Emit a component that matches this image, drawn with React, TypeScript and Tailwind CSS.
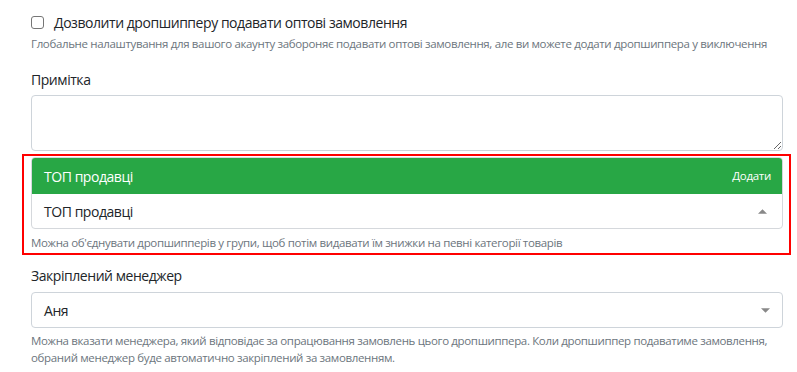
import React from "react";

const font = "font-['Segoe_UI','Open_Sans','Noto_Sans',sans-serif]";

const Caret = ({ up }: { up?: boolean }) => (
  <svg width="9" height="5" viewBox="0 0 10 5" className="text-[#888]">
    {up ? <path d="M0 5 L5 0 L10 5 Z" fill="currentColor" /> : <path d="M0 0 L10 0 L5 5 Z" fill="currentColor" />}
  </svg>
);

export default function App() {
  return (
    <div className={`${font} w-[797px] h-[372px] overflow-hidden bg-white text-[#212529] pl-[31px] pr-[14px] pt-[12px]`}>
      {/* wholesale checkbox */}
      <label className="flex items-center gap-[10px] h-[20px] text-[14px] tracking-[-0.45px]">
        <span className="w-[13px] h-[13px] rounded-[3px] border border-[#767676] bg-white" />
        <span>Дозволити дропшипперу подавати оптові замовлення</span>
      </label>
      <p className="mt-[4px] text-[11.5px] leading-[16px] tracking-[-0.35px] text-[#6c757d] whitespace-nowrap">
        Глобальне налаштування для вашого акаунту забороняє подавати оптові замовлення, але ви можете додати дропшиппера у виключення
      </p>

      {/* note */}
      <div className="mt-[18px] text-[14px] leading-[20px] tracking-[-0.45px]">Примітка</div>
      <textarea className="mt-[5px] block w-[752px] h-[56px] rounded-[4px] border border-[#ced4da] bg-white outline-none" />

      {/* groups */}
      <div className="mt-[3px] -ml-[9px] w-[769px] border-2 border-[#ff0000] pl-[7px] pr-[6px] pt-[1px] pb-[2px]">
        <div className="rounded-[4px] border border-[#d5d8dc] overflow-hidden">
          <div className="flex items-center justify-between h-[36px] bg-[#28a745] pl-[12px] pr-[11px] text-white">
            <span className="text-[14px] tracking-[-0.45px]">ТОП продавці</span>
            <span className="text-[11.5px] font-medium tracking-[-0.3px]">Додати</span>
          </div>
          <div className="flex items-center justify-between h-[34px] pl-[12px] pr-[15px] text-[14px] tracking-[-0.45px]">
            <span>ТОП продавці</span>
            <Caret up />
          </div>
        </div>
        <p className="mt-[6px] text-[11.5px] leading-[16px] tracking-[-0.35px] text-[#6c757d]">
          Можна об'єднувати дропшипперів у групи, щоб потім видавати їм знижки на певні категорії товарів
        </p>
      </div>

      {/* manager */}
      <div className="mt-[11px] text-[14px] leading-[20px] tracking-[-0.45px]">Закріплений менеджер</div>
      <div className="mt-[6px] flex items-center justify-between w-[752px] h-[36px] rounded-[4px] border border-[#ced4da] pl-[12px] pr-[12px] text-[14px] tracking-[-0.45px]">
        <span>Аня</span>
        <Caret />
      </div>
      <p className="mt-[4px] w-[752px] text-[11.5px] leading-[17px] tracking-[-0.35px] text-[#6c757d]">
        Можна вказати менеджера, який відповідає за опрацювання замовлень цього дропшиппера. Коли дропшиппер подаватиме замовлення, обраний менеджер буде автоматично закріплений за замовленням.
      </p>
    </div>
  );
}
